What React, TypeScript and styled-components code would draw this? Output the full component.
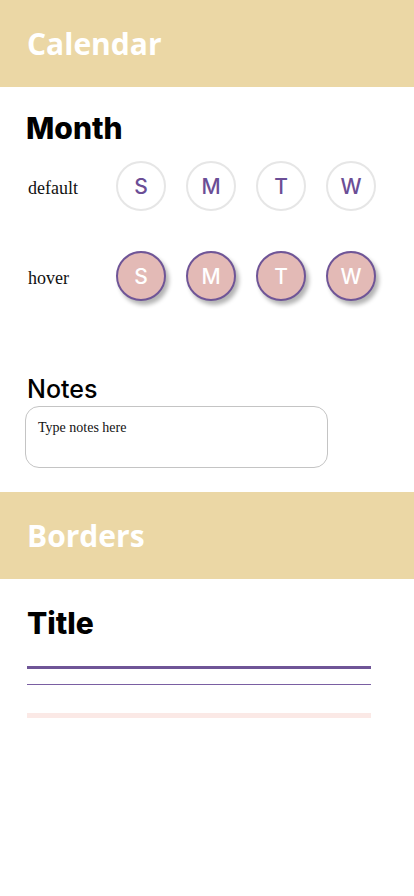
import React from "react";
import styled, { createGlobalStyle } from "styled-components";

const Global = createGlobalStyle`
  html, body { margin: 0; padding: 0; background: #fff; }
  body { font-family: "Open Sans", sans-serif; }
`;

const Page = styled.div`
  width: 414px;
  display: flex;
  flex-direction: column;
`;

const Banner = styled.header`
  height: 87px;
  background: #ebd7a5;
  display: flex;
  align-items: center;
  padding-left: 27px;
  box-sizing: border-box;
`;

const BannerTitle = styled.h1`
  margin: 0;
  color: #fff;
  font-family: "Open Sans", sans-serif;
  font-weight: 700;
  font-size: 30px;
  line-height: 1;
`;

const Section = styled.section<{ $pad: string }>`
  padding: ${(p) => p.$pad};
  display: flex;
  flex-direction: column;
`;

const Heading = styled.h2`
  margin: 0;
  font-family: "Inter", "Noto Sans", sans-serif;
  font-weight: 800;
  font-size: 30px;
  line-height: 36px;
  color: #000;
`;

const SubHeading = styled.h3`
  margin: 0;
  font-family: "Inter", "Noto Sans", sans-serif;
  font-weight: 500;
  font-size: 25px;
  line-height: 30px;
  color: #000;
`;

const DayRow = styled.div<{ $mt: number }>`
  display: flex;
  align-items: center;
  margin-top: ${(p) => p.$mt}px;
`;

const RowLabel = styled.span`
  width: 90px;
  padding: 4px 0 0 2px;
  box-sizing: border-box;
  font-family: "Liberation Serif", serif;
  font-size: 18px;
  color: #111;
`;

const Days = styled.div`
  display: flex;
  gap: 20px;
`;

const Day = styled.div<{ $hover?: boolean }>`
  width: 50px;
  height: 50px;
  box-sizing: border-box;
  border-radius: 50%;
  display: flex;
  align-items: center;
  justify-content: center;
  font-family: "Inter", "Noto Sans", sans-serif;
  font-size: 21px;
  font-weight: 500;
  border: 2px solid ${(p) => (p.$hover ? "#6f5597" : "#e6e6e6")};
  background: ${(p) => (p.$hover ? "#e3bab6" : "#fff")};
  color: ${(p) => (p.$hover ? "#fff" : "#6b4e96")};
  box-shadow: ${(p) => (p.$hover ? "3px 4px 4px rgba(0,0,0,0.3)" : "none")};
`;

const NotesBox = styled.div`
  margin-top: 2px;
  margin-left: -2px;
  width: 303px;
  height: 62px;
  box-sizing: border-box;
  border: 1px solid #c4c4c4;
  border-radius: 14px;
  padding: 13px 12px;
  font-family: "Liberation Serif", serif;
  font-size: 14px;
  color: #111;
`;

const Rule = styled.div<{ $h: number; $c: string; $mt: number }>`
  width: 344px;
  height: ${(p) => p.$h}px;
  background: ${(p) => p.$c};
  margin-top: ${(p) => p.$mt}px;
`;

const days = ["S", "M", "T", "W"];

export default function App() {
  return (
    <Page>
      <Global />
      <Banner>
        <BannerTitle>Calendar</BannerTitle>
      </Banner>
      <Section $pad="23px 0 0 26px">
        <Heading>Month</Heading>
        <DayRow $mt={15}>
          <RowLabel>default</RowLabel>
          <Days>
            {days.map((d) => (
              <Day key={d}>{d}</Day>
            ))}
          </Days>
        </DayRow>
        <DayRow $mt={40}>
          <RowLabel>hover</RowLabel>
          <Days>
            {days.map((d) => (
              <Day key={d} $hover>
                {d}
              </Day>
            ))}
          </Days>
        </DayRow>
      </Section>
      <Section $pad="73px 0 24px 27px">
        <SubHeading>Notes</SubHeading>
        <NotesBox>Type notes here</NotesBox>
      </Section>
      <Banner>
        <BannerTitle>Borders</BannerTitle>
      </Banner>
      <Section $pad="26px 0 0 27px">
        <Heading>Title</Heading>
        <Rule $h={3} $c="#6f5597" $mt={25} />
        <Rule $h={1} $c="#7a5fa2" $mt={15} />
        <Rule $h={5} $c="#fbe9e6" $mt={28} />
      </Section>
    </Page>
  );
}
